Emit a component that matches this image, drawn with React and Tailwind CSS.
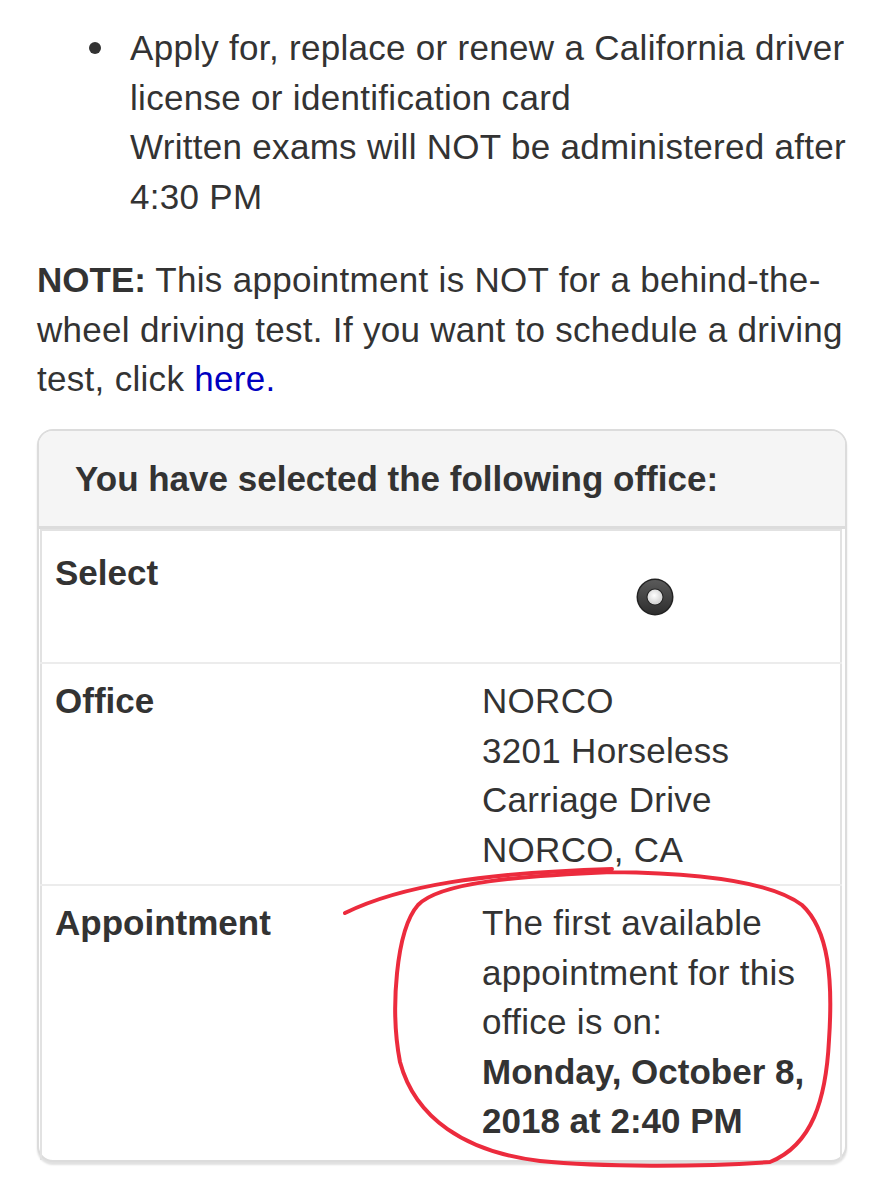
import React from 'react';

// Dark "selected" radio button, drawn like the iOS-style control in the screenshot
const RadioSelected = () => (
  <svg width="38" height="38" viewBox="0 0 38 38">
    <defs>
      <linearGradient id="ring" x1="0" y1="0" x2="0" y2="1">
        <stop offset="0%" stopColor="#5a5a5a" />
        <stop offset="100%" stopColor="#2e2e2e" />
      </linearGradient>
      <radialGradient id="dot" cx="0.45" cy="0.4" r="0.6">
        <stop offset="0%" stopColor="#ffffff" />
        <stop offset="100%" stopColor="#cfcfcf" />
      </radialGradient>
    </defs>
    <circle cx="19" cy="19" r="18.5" fill="#222" />
    <circle cx="19" cy="19" r="17" fill="url(#ring)" />
    <circle cx="19" cy="19" r="8.5" fill="#222" />
    <circle cx="19" cy="19" r="7.5" fill="url(#dot)" />
  </svg>
);

export default function App() {
  return (
    <div className="w-[884px] min-h-[1200px] bg-white text-[#333] text-[35px] leading-[49.5px] tracking-[0.3px] font-['Liberation_Sans','Helvetica',Arial,sans-serif] overflow-hidden">
      {/* Bullet list */}
      <ul className="pt-[23px] pl-[130px] pr-4 whitespace-nowrap">
        <li className="relative">
          <span className="absolute left-[-41px] top-[19px] w-[12px] h-[12px] rounded-full bg-[#333]" />
          Apply for, replace or renew a California driver
          <br />
          license or identification card
          <br />
          Written exams will NOT be administered after
          <br />
          4:30 PM
        </li>
      </ul>

      {/* Note */}
      <p className="mt-[34px] px-[37px] whitespace-nowrap">
        <b className="tracking-normal">NOTE:</b> This appointment is NOT for a behind-the-
        <br />
        wheel driving test. If you want to schedule a driving
        <br />
        test, click <a className="text-[#0000c0]">here.</a>
      </p>

      {/* Selected office panel */}
      <div className="relative mx-[37px] mt-[25px] rounded-[16px] border-2 border-[#dcdcdc] bg-white shadow-[0_3px_2px_rgba(0,0,0,0.12)]">
        <div className="rounded-t-[14px] bg-[#f5f5f5] pl-[36px] py-[23px] border-b-[3px] border-[#dcdcdc] font-bold tracking-normal">
          You have selected the following office:
        </div>
        <div className="px-[1px] pr-[3px]">
          <table className="w-full border-collapse border-x-2 border-t-2 border-[#e2e2e2]">
            <tbody>
              <tr className="border-b-2 border-[#ececec]">
                <td className="w-[428px] align-top pl-[13px] pt-[17px] font-bold tracking-normal">Select</td>
                <td className="align-top pt-[47px] pb-[46px]">
                  <div className="flex justify-center">
                    <RadioSelected />
                  </div>
                </td>
              </tr>
              <tr className="border-b-2 border-[#ececec]">
                <td className="align-top pl-[13px] pt-[12px] font-bold tracking-normal">Office</td>
                <td className="align-top pl-[13px] pt-[12px] pb-[10px]">
                  NORCO
                  <br />
                  3201 Horseless
                  <br />
                  Carriage Drive
                  <br />
                  NORCO, CA
                </td>
              </tr>
              <tr>
                <td className="align-top pl-[13px] pt-[12px] font-bold tracking-normal">Appointment</td>
                <td className="align-top pl-[13px] pt-[12px] pb-[14px] whitespace-nowrap">
                  The first available
                  <br />
                  appointment for this
                  <br />
                  office is on:
                  <br />
                  <b className="tracking-normal">
                    Monday, October 8,
                    <br />
                    2018 at 2:40 PM
                  </b>
                </td>
              </tr>
            </tbody>
          </table>
        </div>
      </div>

      {/* Hand-drawn red annotation over the page */}
      <svg
        className="absolute left-0 top-0 pointer-events-none"
        width="884"
        height="1200"
        viewBox="0 0 884 1200"
        fill="none"
      >
        <path
          d="M345 913 C 400 886 480 873 612 869"
          stroke="#ec2b3d"
          strokeWidth="4"
          strokeLinecap="round"
        />
        <path
          d="M612 872 C 520 876 440 882 418 905 C 396 930 390 1010 400 1062 C 415 1118 465 1152 540 1161 C 600 1167 700 1167 770 1162 C 812 1145 826 1100 829 1040 C 833 980 829 930 802 905 C 772 882 700 873 612 872"
          stroke="#ec2b3d"
          strokeWidth="4"
          strokeLinecap="round"
          strokeLinejoin="round"
        />
      </svg>
    </div>
  );
}
